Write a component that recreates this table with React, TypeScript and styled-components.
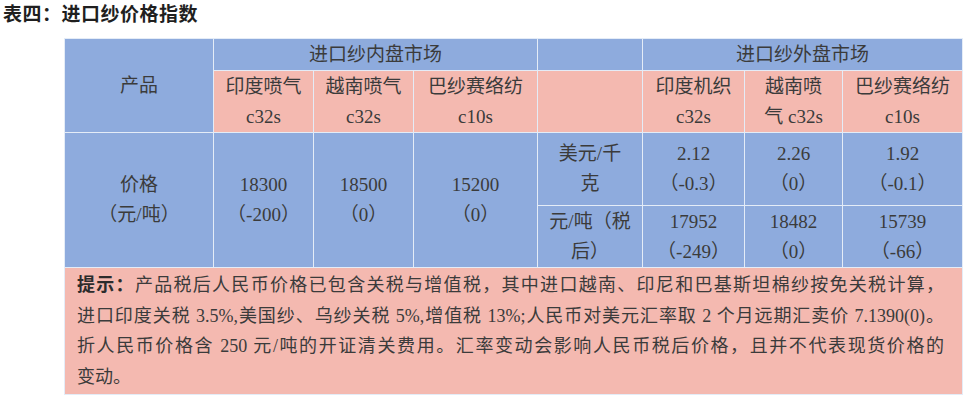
import React from 'react'
import styled, { createGlobalStyle } from 'styled-components'

const BLUE = '#8eabdd'
const PINK = '#f4b9b0'
const INK = '#3b3b3b'
const GRID = '#e4ecf7'

const GlobalStyle = createGlobalStyle`
    html, body {
        margin: 0;
        padding: 0;
        background: #ffffff;
    }
    body {
        font-family: "Liberation Serif", "Noto Sans CJK SC", serif;
        color: ${INK};
    }
`

type Tone = 'blue' | 'pink'

const Page = styled.div`
    width: 968px;
    height: 400px;
    overflow: hidden;
`

const Title = styled.h1`
    margin: 0;
    padding: 0 0 0 3px;
    height: 32px;
    line-height: 30px;
    font-size: 19px;
    font-weight: 700;
    letter-spacing: 0.5px;
    color: #1f1f1f;
`

const Table = styled.table`
    margin: 6px 0 0 64px;
    width: 898px;
    table-layout: fixed;
    border-collapse: collapse;
    border: 1.5px solid #6f6f6f;
`

const Row = styled.tr<{ h: number }>`
    height: ${({ h }) => h}px;
`

const Cell = styled.td<{ tone: Tone }>`
    padding: 0;
    background: ${({ tone }) => (tone === 'blue' ? BLUE : PINK)};
    border: 1px solid ${GRID};
    text-align: center;
    vertical-align: middle;
    font-size: 19px;
    line-height: 30px;
    color: ${INK};
    white-space: nowrap;
`

const Line = styled.div``

const NoteCell = styled.td`
    padding: 2px 18px 2px 12px;
    background: ${PINK};
    border: 1px solid ${GRID};
    vertical-align: top;
    font-size: 18px;
    line-height: 30.5px;
    color: ${INK};
`

const NoteLine = styled.div<{ last?: boolean }>`
    white-space: nowrap;
    text-align: ${({ last }) => (last ? 'left' : 'justify')};
    text-align-last: ${({ last }) => (last ? 'left' : 'justify')};
`

const Lead = styled.b`
    font-weight: 700;
    color: #2c2c2c;
`

const columns = [149, 100, 100, 124, 105, 102, 98, 120]

const Stack: React.FC<{ lines: string[] }> = ({ lines }) => (
    <>
        {lines.map((l, i) => (
            <Line key={i}>{l}</Line>
        ))}
    </>
)

const inland = [
    ['印度喷气', 'c32s'],
    ['越南喷气', 'c32s'],
    ['巴纱赛络纺', 'c10s'],
]
const outer = [
    ['印度机织', 'c32s'],
    ['越南喷', '气 c32s'],
    ['巴纱赛络纺', 'c10s'],
]
const inlandPrice = [
    ['18300', '（-200）'],
    ['18500', '（0）'],
    ['15200', '（0）'],
]
const usdPrice = [
    ['2.12', '（-0.3）'],
    ['2.26', '（0）'],
    ['1.92', '（-0.1）'],
]
const cnyPrice = [
    ['17952', '（-249）'],
    ['18482', '（0）'],
    ['15739', '（-66）'],
]

const App: React.FC = () => {
    return (
        <Page>
            <GlobalStyle />
            <Title>表四：进口纱价格指数</Title>
            <Table>
                <colgroup>
                    {columns.map((w, i) => (
                        <col key={i} style={{ width: w }} />
                    ))}
                </colgroup>
                <tbody>
                    <Row h={32}>
                        <Cell tone="blue" rowSpan={2}>
                            产品
                        </Cell>
                        <Cell tone="blue" colSpan={3}>
                            进口纱内盘市场
                        </Cell>
                        <Cell tone="blue" />
                        <Cell tone="blue" colSpan={3}>
                            进口纱外盘市场
                        </Cell>
                    </Row>
                    <Row h={62}>
                        {inland.map((lines, i) => (
                            <Cell tone="pink" key={i}>
                                <Stack lines={lines} />
                            </Cell>
                        ))}
                        <Cell tone="pink" />
                        {outer.map((lines, i) => (
                            <Cell tone="pink" key={i}>
                                <Stack lines={lines} />
                            </Cell>
                        ))}
                    </Row>
                    <Row h={73}>
                        <Cell tone="blue" rowSpan={2}>
                            <Stack lines={['价格', '（元/吨）']} />
                        </Cell>
                        {inlandPrice.map((lines, i) => (
                            <Cell tone="blue" rowSpan={2} key={i}>
                                <Stack lines={lines} />
                            </Cell>
                        ))}
                        <Cell tone="blue">
                            <Stack lines={['美元/千', '克']} />
                        </Cell>
                        {usdPrice.map((lines, i) => (
                            <Cell tone="blue" key={i}>
                                <Stack lines={lines} />
                            </Cell>
                        ))}
                    </Row>
                    <Row h={62}>
                        <Cell tone="blue">
                            <Stack lines={['元/吨（税', '后）']} />
                        </Cell>
                        {cnyPrice.map((lines, i) => (
                            <Cell tone="blue" key={i}>
                                <Stack lines={lines} />
                            </Cell>
                        ))}
                    </Row>
                    <Row h={124}>
                        <NoteCell colSpan={8}>
                            <NoteLine>
                                <Lead>提示：</Lead>
                                产品税后人民币价格已包含关税与增值税，其中进口越南、印尼和巴基斯坦棉纱按免关税计算，
                            </NoteLine>
                            <NoteLine>
                                进口印度关税 3.5%,美国纱、乌纱关税 5%,增值税 13%;人民币对美元汇率取 2 个月远期汇卖价 7.1390(0)。
                            </NoteLine>
                            <NoteLine>
                                折人民币价格含 250 元/吨的开证清关费用。汇率变动会影响人民币税后价格，且并不代表现货价格的
                            </NoteLine>
                            <NoteLine last>变动。</NoteLine>
                        </NoteCell>
                    </Row>
                </tbody>
            </Table>
        </Page>
    )
}

export default App
